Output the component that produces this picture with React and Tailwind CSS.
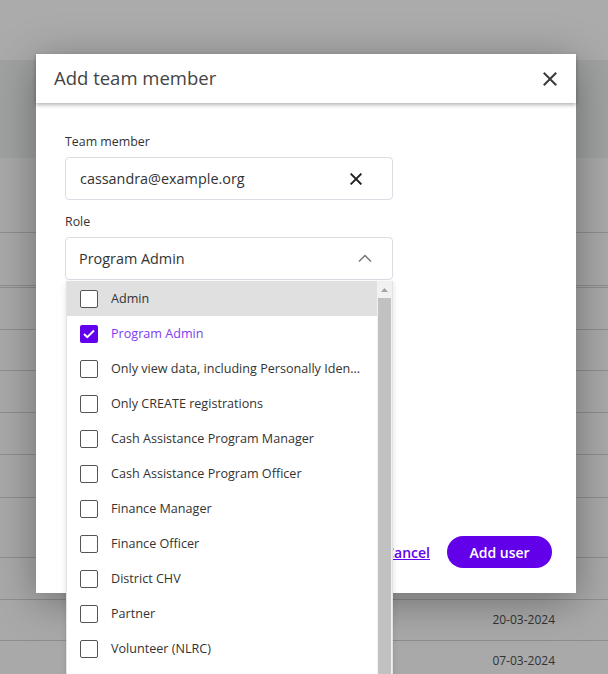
import React from "react";

const roles = [
  "Admin",
  "Program Admin",
  "Only view data, including Personally Iden...",
  "Only CREATE registrations",
  "Cash Assistance Program Manager",
  "Cash Assistance Program Officer",
  "Finance Manager",
  "Finance Officer",
  "District CHV",
  "Partner",
  "Volunteer (NLRC)",
];

function XIcon({ size = 14, stroke = 2.2, color = "#333" }) {
  return (
    <svg width={size} height={size} viewBox="0 0 14 14" fill="none">
      <path d="M1.5 1.5L12.5 12.5M12.5 1.5L1.5 12.5" stroke={color} strokeWidth={stroke} strokeLinecap="square" />
    </svg>
  );
}

export default function App() {
  return (
    <div className="relative w-[608px] h-[674px] overflow-hidden bg-[#a9a9a9] text-[#333]" style={{ fontFamily: '"Open Sans", "Noto Sans", sans-serif' }}>
      {/* background page (dimmed) */}
      <div className="h-[60px] bg-[#ababab]" />
      <div className="h-[98px] bg-[#a0a2a2]" />
      <div className="h-[75px] border-b border-[#8e8e8e]" />
      <div className="h-[55px] border-b-[3px] border-double border-[#8e8e8e]" />
      <div className="h-[42px] border-b border-[#8e8e8e]" />
      <div className="h-[41px] border-b border-[#8e8e8e]" />
      <div className="h-[42px] border-b border-[#8e8e8e]" />
      <div className="h-[42px] border-b border-[#8e8e8e]" />
      <div className="h-[43px] border-b border-[#8e8e8e]" />
      <div className="h-[60px] border-b border-[#8e8e8e]" />
      <div className="h-[42px] border-b border-[#8e8e8e]" />
      <div className="h-[41px] border-b border-[#8e8e8e] flex items-center justify-end pr-[53px] text-[12px] text-[#333]">20-03-2024</div>
      <div className="h-[41px] border-b border-[#8e8e8e] flex items-center justify-end pr-[53px] text-[12px] text-[#333]">07-03-2024</div>

      {/* modal */}
      <div className="absolute left-[36px] top-[54px] w-[540px] h-[539px] bg-white flex flex-col shadow-[0_8px_40px_rgba(0,0,0,0.35)]">
        <div className="h-[49px] shrink-0 flex items-center justify-between pl-[18px] pr-[19px] shadow-[0_2px_4px_rgba(0,0,0,0.3)] relative z-10">
          <span className="text-[18.5px] text-[#444] leading-none">Add team member</span>
          <XIcon size={14} stroke={2} color="#3a3a3a" />
        </div>
        <div className="flex-1 flex flex-col pl-[29px] pr-[24px] pt-[30px] pb-[25px]">
          <div className="text-[12.4px] leading-[18px] text-[#333]">Team member</div>
          <div className="mt-[6px] w-[328px] h-[43px] rounded-[4px] border border-[#dcdce4] flex items-center justify-between pl-[14px] pr-[30px]">
            <span className="text-[14.4px] text-[#333]">cassandra@example.org</span>
            <XIcon size={12} stroke={2.2} color="#222" />
          </div>
          <div className="mt-[13px] text-[12.4px] leading-[18px] text-[#333]">Role</div>
          <div className="mt-[6px] w-[328px] h-[43px] rounded-[4px] border border-[#dcdce4] flex items-center justify-between pl-[13px] pr-[20px]">
            <span className="text-[14.4px] text-[#333]">Program Admin</span>
            <svg width="14" height="9" viewBox="0 0 14 9" fill="none">
              <path d="M1 7.5L7 1.5L13 7.5" stroke="#777" strokeWidth="1.5" />
            </svg>
          </div>
          <div className="flex-1" />
          <div className="flex items-center justify-end gap-[17px]">
            <a className="text-[14px] font-semibold text-[#6200ee] underline">Cancel</a>
            <button className="w-[105px] h-[32px] rounded-full bg-[#6200ea] text-white text-[14px] font-semibold">Add user</button>
          </div>
        </div>
      </div>

      {/* dropdown list */}
      <div className="absolute left-[66px] top-[281px] w-[327px] h-[420px] bg-white border-x border-[#e3e3e3] flex shadow-[0_2px_6px_rgba(0,0,0,0.12)]">
        <div className="flex-1 flex flex-col">
          {roles.map((r, i) => {
            const checked = i === 1;
            return (
              <div key={r} className={`h-[35px] shrink-0 flex items-center pl-[13px] ${i === 0 ? "bg-[#e0e0e0]" : ""}`}>
                {checked ? (
                  <div className="w-[18px] h-[18px] rounded-[2px] bg-[#6200ee] flex items-center justify-center">
                    <svg width="12" height="10" viewBox="0 0 12 10" fill="none">
                      <path d="M1 5L4.3 8.2L11 1.5" stroke="white" strokeWidth="2" />
                    </svg>
                  </div>
                ) : (
                  <div className="w-[18px] h-[18px] rounded-[2px] border-[1.5px] border-[#555] bg-white" />
                )}
                <span className={`ml-[13px] mt-[2px] text-[12.6px] whitespace-nowrap ${checked ? "text-[#7c3cf0]" : "text-[#333]"}`}>{r}</span>
              </div>
            );
          })}
        </div>
        <div className="w-[15px] shrink-0 bg-[#f1f1f1] flex flex-col items-center">
          <div className="h-[17px] flex items-center justify-center">
            <svg width="7" height="4" viewBox="0 0 7 4"><path d="M0 4L3.5 0L7 4Z" fill="#a3a3a3" /></svg>
          </div>
          <div className="w-[13px] flex-1 bg-[#c1c1c1]" />
        </div>
      </div>
    </div>
  );
}
